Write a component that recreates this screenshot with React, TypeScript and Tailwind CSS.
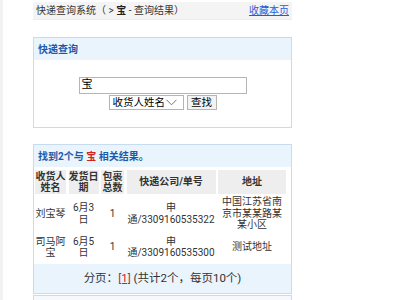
export default function App() {
  const rows = [
    { name: '刘宝琴', date: '6月3日', count: '1', no: '3309160535322', addr: '中国江苏省南京市某某路某某小区' },
    { name: '司马阿宝', date: '6月5日', count: '1', no: '3309160535300', addr: '测试地址' },
  ];

  return (
    <div
      className="flex w-[400px] h-[300px] overflow-hidden bg-white text-[#333]"
      style={{ fontFamily: 'Roboto, "Noto Sans CJK SC", sans-serif' }}
    >
      <div className="w-[3px] shrink-0 bg-[#f2f2f2]" />
      <div className="ml-[30px] w-[259px] shrink-0">
        {/* top bar */}
        <div className="mt-[2px] h-[18px] bg-[#f4f4f4] border-b border-[#ececec] flex items-center justify-between px-[3px] text-[10px]">
          <span>快递查询系统（ &gt; <b className="text-[#222]">宝</b> - 查询结果）</span>
          <a className="text-[#2a5bd7] underline">收藏本页</a>
        </div>

        {/* search box */}
        <div className="mt-[17px] h-[91px] border border-[#c7dcf0]">
          <div className="h-[22px] bg-[#eaf4fd] flex items-center pl-[4px] text-[10px] font-bold text-[#1e5aa8]">
            快递查询
          </div>
          <div className="flex flex-col items-center pt-[17px]">
            <div className="w-[168px] h-[17px] border border-[#b5b5b5] flex items-center pl-[2px] text-[11px] text-black">
              宝
            </div>
            <div className="flex items-center gap-[3px] mt-[1px]">
              <div className="w-[75px] h-[15px] border border-[#b5b5b5] flex items-center pl-[3px] text-[10.5px] text-black">
                <span>收货人姓名</span>
                <svg width="11" height="7" viewBox="0 0 11 7" className="ml-[1px]">
                  <polyline points="0.5,0.8 5.5,5.8 10.5,0.8" fill="none" stroke="#777" strokeWidth="1" />
                </svg>
              </div>
              <div className="w-[30px] h-[15px] border border-[#b5b5b5] bg-[#f3f3f3] flex items-center justify-center text-[10.5px] text-black">
                查找
              </div>
            </div>
          </div>
        </div>

        {/* results */}
        <div className="mt-[16px] border border-[#c7dcf0]">
          <div className="h-[22px] bg-[#eaf4fd] flex items-center pl-[4px] text-[10px] font-bold text-[#1e5aa8]">
            找到2个与&nbsp;<span className="text-[#d42020]">宝</span>&nbsp;相关结果。
          </div>
          <div className="grid grid-cols-[31px_30px_23px_89px_68px] gap-x-[2.5px] px-[1px] mt-[3px] text-[10px] leading-[11.5px] text-center">
            <div className="bg-[#eeeeee] font-bold h-[24px] flex items-center justify-center">收货人姓名</div>
            <div className="bg-[#eeeeee] font-bold h-[24px] flex items-center justify-center">发货日期</div>
            <div className="bg-[#eeeeee] font-bold h-[24px] flex items-center justify-center">包裹总数</div>
            <div className="bg-[#eeeeee] font-bold h-[24px] flex items-center justify-center">快递公司/单号</div>
            <div className="bg-[#eeeeee] font-bold h-[24px] flex items-center justify-center">地址</div>
            {rows.map((r, i) => (
              <div key={i} className="contents">
                <div className={`${i === 0 ? 'h-[39px]' : 'h-[28px]'} flex items-center justify-center`}>{r.name}</div>
                <div className={`${i === 0 ? 'h-[39px]' : 'h-[28px]'} flex items-center justify-center`}>{r.date}</div>
                <div className={`${i === 0 ? 'h-[39px]' : 'h-[28px]'} flex items-center justify-center`}>{r.count}</div>
                <div className={`${i === 0 ? 'h-[39px]' : 'h-[28px]'} flex flex-col items-center justify-center whitespace-nowrap`}>
                  <span>申</span>
                  <span>通/{r.no}</span>
                </div>
                <div className={`${i === 0 ? 'h-[39px]' : 'h-[28px]'} flex items-center justify-center`}>{r.addr}</div>
              </div>
            ))}
          </div>
          <div className="mt-[3px] h-[29px] bg-[#eaf4fd] flex items-center justify-center text-[11.5px]">
            分页：<span className="text-[#d42020] underline">[1]</span>&nbsp;(共计2个，每页10个)
          </div>
        </div>

        {/* next box, cut off */}
        <div className="mt-[1px] h-[20px] border border-[#c7dcf0] bg-[#f5f9fd] pl-[4px] pt-[3px] text-[10px] text-[#2a5bd7]">
          返回首页 | 重新查询
        </div>
      </div>
    </div>
  );
}
